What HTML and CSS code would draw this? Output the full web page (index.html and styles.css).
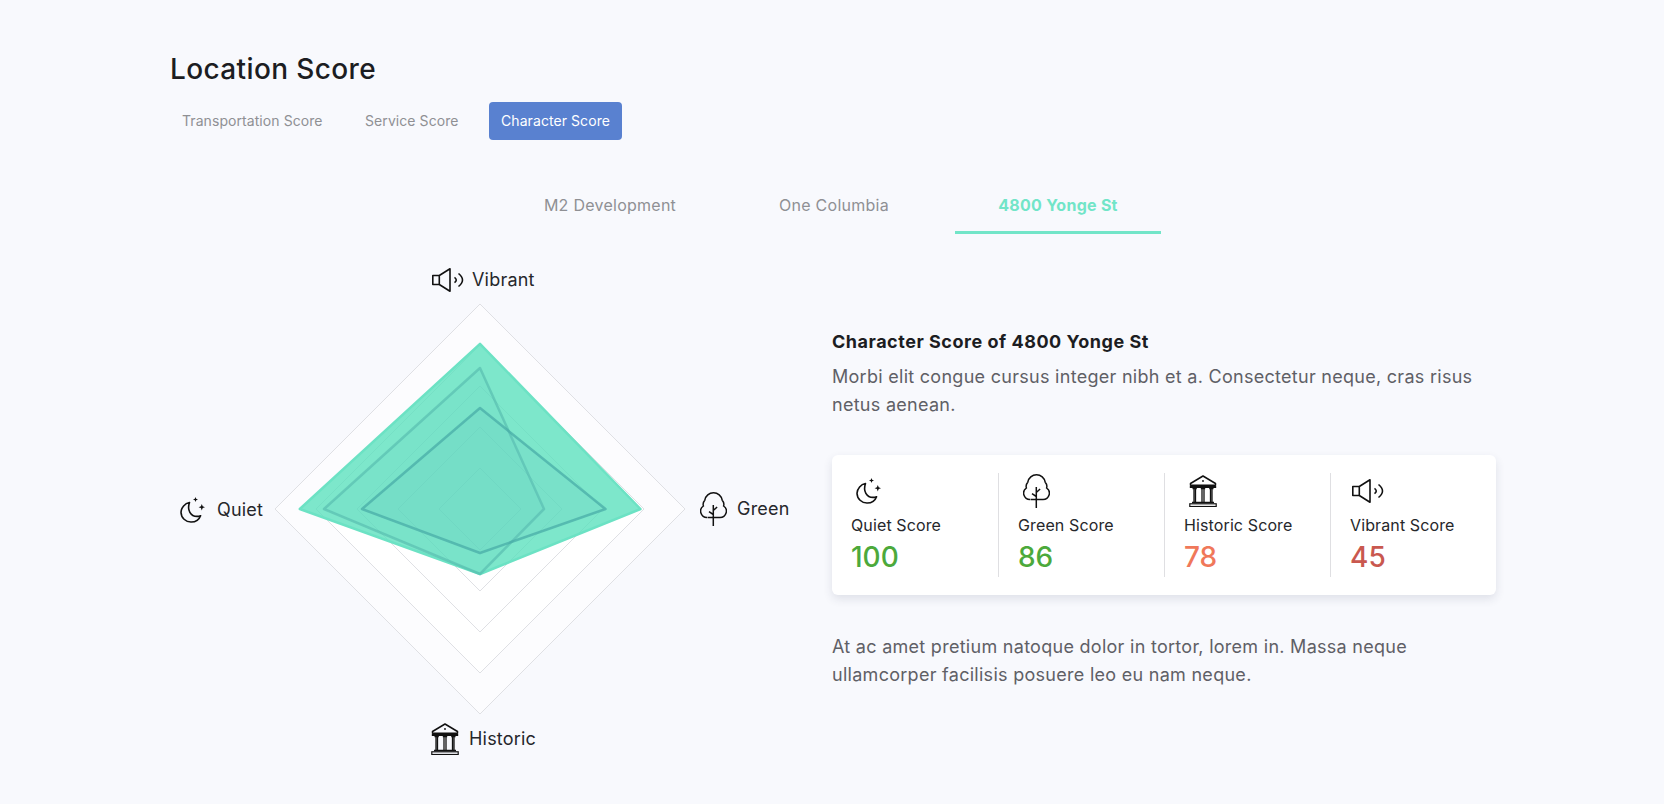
FILE: index.html
```html
<!DOCTYPE html>
<html lang="en">
<head>
<meta charset="utf-8">
<title>Location Score</title>
<link rel="stylesheet" href="styles.css">
</head>
<body>
<svg class="defs" width="0" height="0" aria-hidden="true">
  <defs>
    <symbol id="moon" viewBox="0 0 25 26">
      <path d="M9.500 5.500A10.600 10.600 0 0 0 1 15.200 10 10 0 0 0 11.200 25c4.300 0 8-2.600 9.400-6.300-1.100.5-2.300.7-3.600.7-6.300 0-10.200-6.300-7.500-13.900Z" fill="none" stroke="currentColor" stroke-width="1.600" stroke-linejoin="round"/>
      <path d="M15.500 0l.7 1.800 1.800.7-1.800.7-.7 1.800-.7-1.800-1.800-.7 1.800-.7ZM21.800 7l.9 2.300 2.300.9-2.300.9-.9 2.300-.9-2.300-2.300-.9 2.300-.9Z" fill="currentColor"/>
    </symbol>
    <symbol id="tree" viewBox="0 0 27 34">
      <path d="M7.500 25.500H7A6.300 6.300 0 0 1 3.400 14 6 6 0 0 1 4.800 8.200 8.800 8.800 0 0 1 13.500.8a8.800 8.800 0 0 1 8.700 7.400A6 6 0 0 1 23.600 14 6.300 6.300 0 0 1 20 25.500H8" fill="none" stroke="currentColor" stroke-width="1.500"/>
      <path d="M13.300 34V13M13.300 22.500l-4.300-2.800M13.300 18.500l3.800-3.500" fill="none" stroke="currentColor" stroke-width="1.500"/>
    </symbol>
    <symbol id="bank" viewBox="0 0 28 32">
      <path d="M14 1 1.500 8.500v1.700h25V8.500Z" fill="none" stroke="currentColor" stroke-width="1.500" stroke-linejoin="round"/>
      <path d="M.8 12h26.400" stroke="currentColor" stroke-width="2"/>
      <path d="M3.500 13.500h4.300M5 13.500v13.500M6.500 13.500v13.500M11.800 13.500h4.400M13 13.500v13.500M15 13.500v13.500M20.200 13.500h4.300M21.500 13.500v13.500M23 13.500v13.500" fill="none" stroke="currentColor" stroke-width="1.300"/>
      <path d="M3 27.500h22" stroke="currentColor" stroke-width="1.500"/>
      <rect x=".8" y="28.800" width="26.400" height="2.700" fill="none" stroke="currentColor" stroke-width="1.200"/>
      <circle cx="14" cy="6" r=".9" fill="currentColor"/>
    </symbol>
    <symbol id="speaker" viewBox="0 0 32 24">
      <path d="M.8 7.500h6.500v9H.8ZM7.300 7.500 18 .8v22.400L7.300 16.500" fill="none" stroke="currentColor" stroke-width="1.600" stroke-linejoin="round"/>
      <path d="M22.500 9.300Q26 12 22.500 14.700M26.500 5.500Q34.500 12 26.500 18.500" fill="none" stroke="currentColor" stroke-width="1.600"/>
    </symbol>
  </defs>
</svg>

<main class="page">
  <h1 class="title">Location Score</h1>
  <nav class="score-tabs">
    <a class="score-tab">Transportation Score</a>
    <a class="score-tab">Service Score</a>
    <a class="score-tab is-active">Character Score</a>
  </nav>
  <nav class="site-tabs">
    <a class="site-tab">M2 Development</a>
    <a class="site-tab">One Columbia</a>
    <a class="site-tab is-active">4800 Yonge St</a>
  </nav>

  <section class="content">
    <div class="chart">
      <svg class="radar" viewBox="0 0 420 420" width="420" height="420">
        <g class="rings">
          <polygon class="ring-outer" points="210,5 415,210 210,415 5,210"/>
          <polygon points="210,46 374,210 210,374 46,210"/>
          <polygon points="210,87 333,210 210,333 87,210"/>
          <polygon points="210,128 292,210 210,292 128,210"/>
          <polygon points="210,169 251,210 210,251 169,210"/>
        </g>
        <polygon class="series series-a" points="210,44.800 370.500,210 210,275 29.800,210"/>
        <polygon class="series series-b" points="210,69 274,210 210,275 54,210"/>
        <polygon class="series series-c" points="210,109 335.500,210 210,254 92,210"/>
      </svg>
      <div class="axis axis-top"><svg class="i-speaker"><use href="#speaker"/></svg><span>Vibrant</span></div>
      <div class="axis axis-left"><svg class="i-moon"><use href="#moon"/></svg><span>Quiet</span></div>
      <div class="axis axis-right"><svg class="i-tree"><use href="#tree"/></svg><span>Green</span></div>
      <div class="axis axis-bottom"><svg class="i-bank"><use href="#bank"/></svg><span>Historic</span></div>
    </div>

    <div class="details">
      <h2 class="details-title">Character Score of 4800 Yonge St</h2>
      <p class="copy">Morbi elit congue cursus integer nibh et a. Consectetur neque, cras risus netus aenean.</p>
      <div class="card">
        <div class="stat">
          <div class="stat-icon"><svg class="i-moon offset-moon"><use href="#moon"/></svg></div>
          <div class="stat-label">Quiet Score</div>
          <div class="stat-value good">100</div>
        </div>
        <div class="stat">
          <div class="stat-icon"><svg class="i-tree offset-tree"><use href="#tree"/></svg></div>
          <div class="stat-label">Green Score</div>
          <div class="stat-value good">86</div>
        </div>
        <div class="stat">
          <div class="stat-icon"><svg class="i-bank offset-bank"><use href="#bank"/></svg></div>
          <div class="stat-label">Historic Score</div>
          <div class="stat-value fair">78</div>
        </div>
        <div class="stat">
          <div class="stat-icon"><svg class="i-speaker offset-speaker"><use href="#speaker"/></svg></div>
          <div class="stat-label">Vibrant Score</div>
          <div class="stat-value poor">45</div>
        </div>
      </div>
      <p class="copy copy-last">At ac amet pretium natoque dolor in tortor, lorem in. Massa neque ullamcorper facilisis posuere leo eu nam neque.</p>
    </div>
  </section>
</main>
</body>
</html>
```
FILE: styles.css
```css
* { box-sizing: border-box; }

html, body { margin: 0; height: 100%; }

body {
  background: #f8f9fd;
  color: #1c1d22;
  font-family: Inter, "Liberation Sans", sans-serif;
  overflow: hidden;
}

.defs { position: absolute; }

.page { padding: 50px 168px 0 170px; }

.title {
  margin: 0;
  font-size: 28px;
  line-height: 38px;
  font-weight: 500;
  letter-spacing: .38px;
  color: #1c1d22;
}

.score-tabs {
  display: flex;
  gap: 18.500px;
  margin-top: 14px;
}

.score-tab {
  height: 38px;
  padding: 0 12px;
  border-radius: 4px;
  font-size: 14px;
  line-height: 38px;
  letter-spacing: .07px;
  color: #8f9094;
}

.score-tab.is-active {
  background: #5981d0;
  color: #fff;
}

.site-tabs {
  display: flex;
  gap: 18px;
  margin-top: 32px;
  padding-left: 337px;
}

.site-tab {
  width: 206px;
  height: 62px;
  padding-top: 21px;
  text-align: center;
  font-size: 16px;
  line-height: 24px;
  letter-spacing: .26px;
  color: #8f9094;
  border-bottom: 3px solid transparent;
}

.site-tab.is-active {
  color: #72e5c8;
  font-weight: 700;
  border-bottom-color: #72e5c8;
}

.content {
  display: flex;
  align-items: flex-start;
  margin-top: 19px;
}

.chart {
  position: relative;
  flex: 0 0 662px;
  height: 530px;
}

.radar {
  position: absolute;
  left: 99.500px;
  top: 45.500px;
}

.rings polygon {
  fill: #fff;
  stroke: #dfe0e4;
  stroke-width: 1;
}

.rings .ring-outer { fill: #fcfcfe; }

.series { stroke-linejoin: round; stroke-width: 2.500; }

.series-a { fill: rgba(84, 223, 187, .76); stroke: #6ce2c4; }
.series-b { fill: rgba(100, 200, 190, .12); stroke: rgba(80, 180, 170, .55); }
.series-c { fill: rgba(100, 190, 190, .14); stroke: rgba(70, 170, 165, .7); }

.axis {
  position: absolute;
  display: flex;
  align-items: center;
  font-size: 18px;
  line-height: 24px;
  letter-spacing: .2px;
  color: #26272b;
}

.axis-top { left: 262px; top: 15px; gap: 8px; }
.axis-left { left: 10px; top: 244px; gap: 12px; }
.axis-right { left: 530px; top: 239px; gap: 10px; }
.axis-bottom { left: 261px; top: 470px; gap: 10px; }

.i-moon { width: 25px; height: 26px; color: #111; }
.i-tree { width: 27px; height: 34px; color: #111; }
.i-bank { width: 28px; height: 32px; color: #111; }
.i-speaker { width: 32px; height: 24px; color: #111; }

.details {
  flex: 1;
  padding-top: 77px;
}

.details-title {
  margin: 0;
  font-size: 18px;
  line-height: 24px;
  font-weight: 700;
  letter-spacing: .52px;
  color: #1c1d22;
}

.copy {
  margin: 9px 0 0;
  font-size: 18px;
  line-height: 28px;
  letter-spacing: .28px;
  color: #5f6066;
}

.card {
  display: grid;
  grid-template-columns: repeat(4, 1fr);
  height: 140px;
  margin-top: 36px;
  padding: 18px 0;
  background: #fff;
  border-radius: 6px;
  box-shadow: 0 4px 10px rgba(40, 50, 80, .12);
}

.stat {
  padding-left: 19px;
  border-left: 1px solid #dfdfe2;
}

.stat:first-child { border-left: 0; }

.stat-icon {
  display: flex;
  align-items: center;
  height: 36px;
}

.offset-moon { margin-left: 5px; }
.offset-tree { margin-left: 5px; }
.offset-bank { margin-left: 5px; }
.offset-speaker { margin-left: 2px; }

.stat-label {
  margin-top: 4px;
  font-size: 16px;
  line-height: 24px;
  letter-spacing: .12px;
  color: #26272b;
}

.stat-value {
  margin-top: 2px;
  font-size: 28px;
  line-height: 36px;
  font-weight: 500;
}

.good { color: #4ca93b; }
.fair { color: #f0785a; }
.poor { color: #c9584f; }

.copy-last { margin-top: 38px; }
```
